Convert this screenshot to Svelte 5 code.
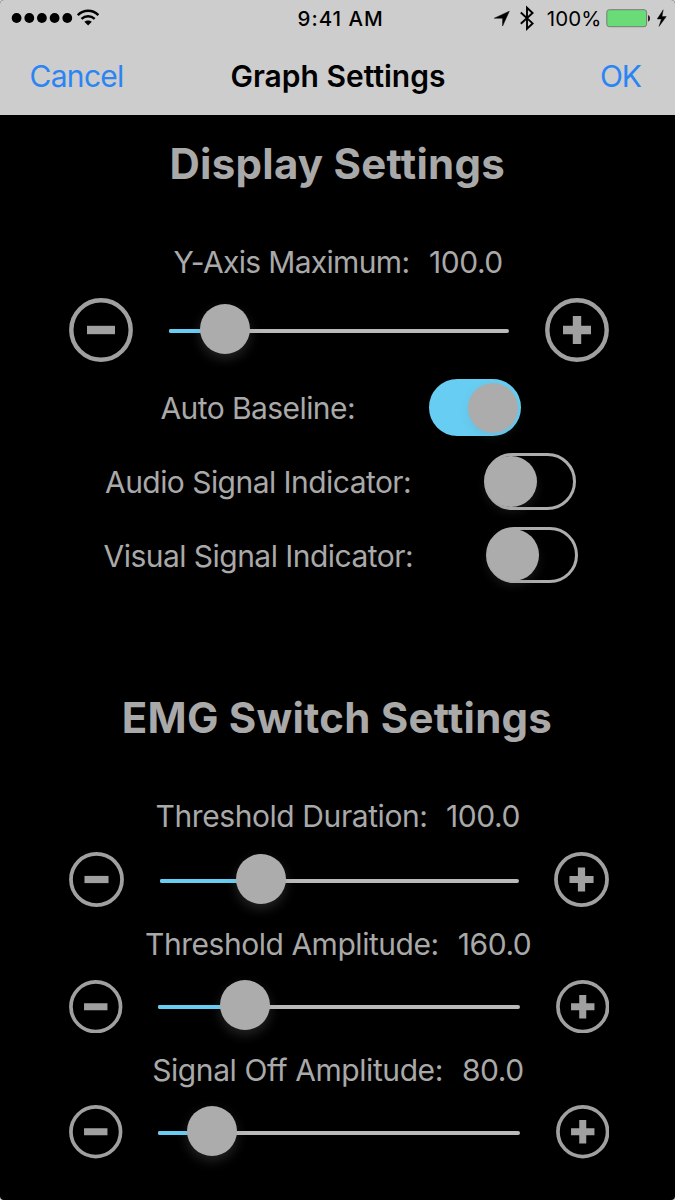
<script>
  const yAxis = {
    label: 'Y-Axis Maximum:', value: '100.0', start: 173.5, gap: 19.5, spacing: -0.67, top: 58.2,
    size: 64, inset: 36.2, fill: 16.5, rowTop: 16, drop: 1
  };
  const toggles = [
    { label: 'Auto Baseline:', start: 160.5, width: 268, spacing: -0.58, on: true, top: 17.1 },
    { label: 'Audio Signal Indicator:', start: 105, width: 379.2, spacing: -0.55, on: false, top: 17 },
    { label: 'Visual Signal Indicator:', start: 103.5, width: 382.5, spacing: -0.535, on: false, top: 16.8 }
  ];
  const emg = [
    { label: 'Threshold Duration:', value: '100.0', start: 155.5, gap: 18.5, spacing: -0.42, top: 58, size: 55, inset: 35.5, fill: 28.2, rowTop: 16, drop: 3 },
    { label: 'Threshold Amplitude:', value: '160.0', start: 145, gap: 19, spacing: -0.465, top: 16.8, size: 53.5, inset: 35.2, fill: 24, rowTop: 16.1, drop: 1 },
    { label: 'Signal Off Amplitude:', value: '80.0', start: 152.2, gap: 19, spacing: -0.42, top: 16.5, size: 53.5, inset: 35.2, fill: 15, rowTop: 15.5, drop: 1.2 }
  ];
</script>

{#snippet round(kind, size)}
  <button class="round" aria-label={kind} style="width:{size}px;height:{size}px">
    <svg viewBox="0 0 64 64">
      <circle cx="32" cy="32" r="29.7" fill="none" stroke="#a0a0a0" stroke-width="4.4" />
      <path d={kind === 'plus' ? 'M18 32H46M32 18V46' : 'M18 32H46'} fill="none" stroke="#a0a0a0" stroke-width="8.4" />
    </svg>
  </button>
{/snippet}

{#snippet setting(s)}
  <div class="label-row" style="margin-top:{s.top}px;padding-left:{s.start}px">
    <span style="letter-spacing:{s.spacing}px;margin-right:{s.gap}px">{s.label}</span>
    <span class="value">{s.value}</span>
  </div>
  <div class="slider-row" style="margin-top:{s.rowTop}px;height:{s.size}px">
    {@render round('minus', s.size)}
    <div class="track" style="margin:{s.drop}px {s.inset}px 0">
      <div class="fill" style="width:{s.fill}%"></div>
      <div class="thumb" style="left:{s.fill}%"></div>
    </div>
    {@render round('plus', s.size)}
  </div>
{/snippet}

<div class="screen">
  <header>
    <div class="status">
      <svg class="signal" viewBox="0 0 90 36">
        {#each [16.6, 29.3, 41.9, 54.6, 67.3] as cx}
          <circle {cx} cy="18" r="4.9" />
        {/each}
      </svg>
      <svg class="wifi" viewBox="0 0 22 36">
        <g fill="none" stroke="#000" stroke-width="2.5">
          <path d="M.8 15.2C6.7 9.4 15.5 9.4 21.4 15.2" />
          <path d="M4.5 18.9C8.4 15.3 13.8 15.3 17.7 18.9" />
        </g>
        <path d="M7.4 21.8C9.5 20 12.7 20 14.8 21.8L11.1 25.4Z" />
      </svg>
      <span class="time">9:41 AM</span>
      <svg class="location" viewBox="0 0 16 36"><path d="M15.3 11.2L8.6 26V18.2H.3Z" stroke="#000" stroke-width=".5" /></svg>
      <svg class="bluetooth" viewBox="0 0 14 36">
        <path d="M.8 12.5L12.6 23.4L7 28.7V7.7L12.6 13L.8 23.8" fill="none" stroke="#000" stroke-width="1.9" />
      </svg>
      <span class="percent">100%</span>
      <svg class="battery" viewBox="0 0 62 36">
        <rect x=".8" y="9.7" width="39.8" height="17" rx="2.5" fill="#69db77" stroke="#777d78" stroke-width="1" />
        <path d="M42.2 15.2C44.4 15.6 44.4 21.2 42.2 21.6Z" />
        <path d="M57.2 9.8L51.2 19H55.4L53 26.4L60.3 16.5H56Z" stroke="#000" stroke-width=".4" />
      </svg>
    </div>
    <nav>
      <span class="link cancel">Cancel</span>
      <span class="title">Graph Settings</span>
      <span class="link ok">OK</span>
    </nav>
  </header>

  <h1 class="display">Display Settings</h1>
  {@render setting(yAxis)}
  {#each toggles as t}
    <div class="toggle-row" style="margin-top:{t.top}px;padding-left:{t.start}px">
      <span style="width:{t.width}px;letter-spacing:{t.spacing}px">{t.label}</span>
      <div class="switch" class:on={t.on}><i></i></div>
    </div>
  {/each}

  <h1 class="emg">EMG Switch Settings</h1>
  {#each emg as s}
    {@render setting(s)}
  {/each}
</div>

<style>
  :global(body) { background: #d8d8d8; }
  .screen {
    box-sizing: border-box;
    width: 675px;
    height: 1200px;
    overflow: hidden;
    display: flex;
    flex-direction: column;
    background: #000;
    border-radius: 4px;
    color: #a9a9a9;
    font: 400 30px Inter, sans-serif;
    white-space: nowrap;
  }
  header { flex: none; height: 115px; background: #cdcdcd; color: #000; }
  .status { display: flex; height: 36px; line-height: 37.4px; font-size: 20.5px; }
  .status svg { display: block; flex: none; height: 36px; }
  .signal { width: 90px; margin-right: -12.8px; }
  .wifi { width: 22px; }
  .time { width: 197px; padding-left: 198.3px; margin-right: -.1px; font-weight: 500; letter-spacing: 1px; }
  .location { width: 16px; }
  .bluetooth { width: 14px; margin-left: 10px; }
  .percent { margin-left: 12.3px; width: 59px; font-size: 20.5px; letter-spacing: .1px; }
  .battery { width: 62px; }
  nav { display: flex; height: 79px; line-height: 80px; padding: 0 34px 0 29.5px; justify-content: space-between; }
  .link { color: #2a85f3; }
  .cancel { width: 201px; letter-spacing: -.7px; }
  .title { flex: 1; font-weight: 600; letter-spacing: 0; }
  .ok { letter-spacing: -1px; }

  h1 { flex: none; height: 40px; line-height: 40px; margin: 0; font-size: 42px; font-weight: 700; }
  .display { margin-top: 29px; padding-left: 169.5px; letter-spacing: .26px; }
  .emg { margin-top: 114.3px; padding-left: 121.8px; letter-spacing: .23px; }

  .label-row { flex: none; display: flex; height: 40px; line-height: 40px; }
  .value { letter-spacing: -.42px; }
  .slider-row { flex: none; display: flex; align-items: center; padding: 0 66px 0 69px; }
  .round { flex: none; padding: 0; border: 0; background: none; }
  .round svg { display: block; width: 100%; height: 100%; }
  .track { position: relative; flex: 1; height: 4px; border-radius: 3px; background: #bababa; }
  .fill { height: 100%; border-radius: 3px; background: #68cdf2; }
  .thumb {
    position: absolute;
    top: -25px;
    width: 50px;
    height: 50px;
    margin-left: -25px;
    border-radius: 50%;
    background: #acacac;
    box-shadow: 0 5px 12px rgba(150, 150, 150, .24);
  }

  .toggle-row { flex: none; display: flex; align-items: center; height: 56.8px; }
  .toggle-row span { padding-top: 1px; }
  .switch {
    box-sizing: border-box;
    width: 92px;
    height: 56.5px;
    display: flex;
    align-items: center;
    border: 3.2px solid #adadad;
    border-radius: 29px;
  }
  .switch i {
    flex: none;
    width: 52px;
    height: 51.5px;
    margin-left: -2.5px;
    border-radius: 50%;
    background: #acacac;
    box-shadow: 0 5px 10px rgba(130, 130, 130, .17);
  }
  .switch.on { border-color: #68cdf2; background: #68cdf2; justify-content: flex-end; }
  .switch.on i { width: 50px; height: 50px; box-shadow: 0 4px 9px rgba(100, 140, 150, .18); }
</style>
